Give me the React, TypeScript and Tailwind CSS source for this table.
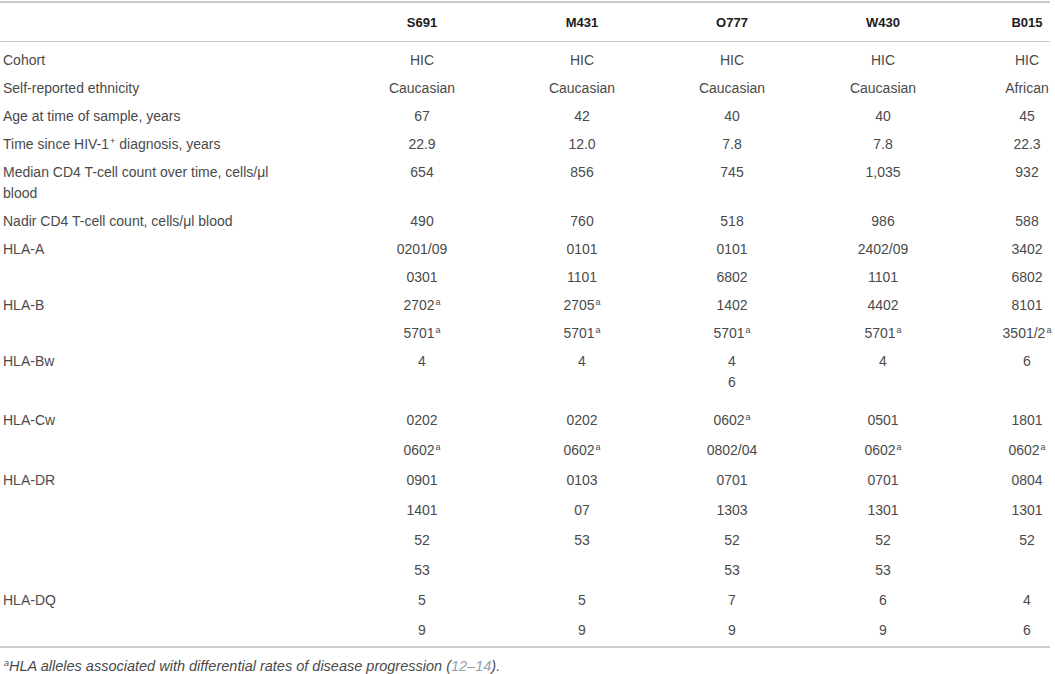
import React from 'react';

type Cell = string | string[];

interface Row {
  label: React.ReactNode;
  vals: Cell[];
  pad: string;
}

const sans = { fontFamily: '"Liberation Sans", Arial, Helvetica, sans-serif' };

const Sup: React.FC<{ children: React.ReactNode }> = ({ children }) => (
  <sup className="text-[9px] -top-[5px] ml-px">{children}</sup>
);

// "0602^a" -> 0602 with a raised a
const renderVal = (v: string) => {
  if (v.endsWith('^a')) {
    return (
      <span>
        {v.slice(0, -2)}
        <Sup>a</Sup>
      </span>
    );
  }
  return <span>{v}</span>;
};

const PAD = 'py-[3.5px]';
const PAD_LOW = 'py-[4.5px]';

const rows: Row[] = [
  { label: 'Cohort', vals: ['HIC', 'HIC', 'HIC', 'HIC', 'HIC'], pad: 'pt-[8px] pb-[3.5px]' },
  {
    label: 'Self-reported ethnicity',
    vals: ['Caucasian', 'Caucasian', 'Caucasian', 'Caucasian', 'African'],
    pad: PAD,
  },
  { label: 'Age at time of sample, years', vals: ['67', '42', '40', '40', '45'], pad: PAD },
  {
    label: (
      <>
        Time since HIV-1<Sup>+</Sup> diagnosis, years
      </>
    ),
    vals: ['22.9', '12.0', '7.8', '7.8', '22.3'],
    pad: PAD,
  },
  {
    label: 'Median CD4 T-cell count over time, cells/μl blood',
    vals: ['654', '856', '745', '1,035', '932'],
    pad: PAD,
  },
  {
    label: 'Nadir CD4 T-cell count, cells/μl blood',
    vals: ['490', '760', '518', '986', '588'],
    pad: PAD,
  },
  { label: 'HLA-A', vals: ['0201/09', '0101', '0101', '2402/09', '3402'], pad: PAD },
  { label: '', vals: ['0301', '1101', '6802', '1101', '6802'], pad: PAD },
  { label: 'HLA-B', vals: ['2702^a', '2705^a', '1402', '4402', '8101'], pad: PAD },
  { label: '', vals: ['5701^a', '5701^a', '5701^a', '5701^a', '3501/2^a'], pad: PAD },
  { label: 'HLA-Bw', vals: ['4', '4', ['4', '6'], '4', '6'], pad: 'pt-[3.5px] pb-[12.5px]' },
  { label: 'HLA-Cw', vals: ['0202', '0202', '0602^a', '0501', '1801'], pad: PAD_LOW },
  { label: '', vals: ['0602^a', '0602^a', '0802/04', '0602^a', '0602^a'], pad: PAD_LOW },
  { label: 'HLA-DR', vals: ['0901', '0103', '0701', '0701', '0804'], pad: PAD_LOW },
  { label: '', vals: ['1401', '07', '1303', '1301', '1301'], pad: PAD_LOW },
  { label: '', vals: ['52', '53', '52', '52', '52'], pad: PAD_LOW },
  { label: '', vals: ['53', '', '53', '53', ''], pad: PAD_LOW },
  { label: 'HLA-DQ', vals: ['5', '5', '7', '6', '4'], pad: PAD_LOW },
  { label: '', vals: ['9', '9', '9', '9', '6'], pad: PAD_LOW },
];

const heads = ['S691', 'M431', 'O777', 'W430', 'B015'];

const GRID = 'grid grid-cols-[342px_160px_160px_140px_162px_86px]';

const DataCell: React.FC<{ last: boolean; children: React.ReactNode }> = ({ last, children }) => (
  <div className={`flex flex-col items-center whitespace-nowrap ${last ? 'pl-[40px]' : ''}`}>
    {children}
  </div>
);

export default function App() {
  return (
    <div className="w-[1055px] h-[674px] bg-white overflow-hidden pt-px" style={sans}>
      <div className="w-[1050px] text-[14px] leading-[21px] text-[#4a4a4a]">
        {/* header */}
        <div className={`${GRID} border-t-2 border-b border-[#c9c9c9] h-[41px] items-center pt-[1px]`}>
          <div />
          {heads.map((h, i) => (
            <DataCell key={h} last={i === 4}>
              <span className="font-bold text-[13px] text-[#1c1c1c]">{h}</span>
            </DataCell>
          ))}
        </div>

        {/* body */}
        <div className="border-b-2 border-[#cfcfcf]">
          {rows.map((row, ri) => (
            <div key={ri} className={`${GRID} items-start ${row.pad}`}>
              <div className="pl-[3px] w-[290px]">{row.label}</div>
              {row.vals.map((v, ci) => (
                <DataCell key={ci} last={ci === 4}>
                  {Array.isArray(v) ? v.map((x) => <div key={x}>{renderVal(x)}</div>) : renderVal(v)}
                </DataCell>
              ))}
            </div>
          ))}
        </div>

        {/* footnote */}
        <div className="pl-[3px] pt-[9px] italic text-[14.5px] leading-[18px] text-[#4a4a4a]">
          <Sup>a</Sup>HLA alleles associated with differential rates of disease progression (
          <span className="text-[#8fa0b3]">12–14</span>).
        </div>
      </div>
    </div>
  );
}
